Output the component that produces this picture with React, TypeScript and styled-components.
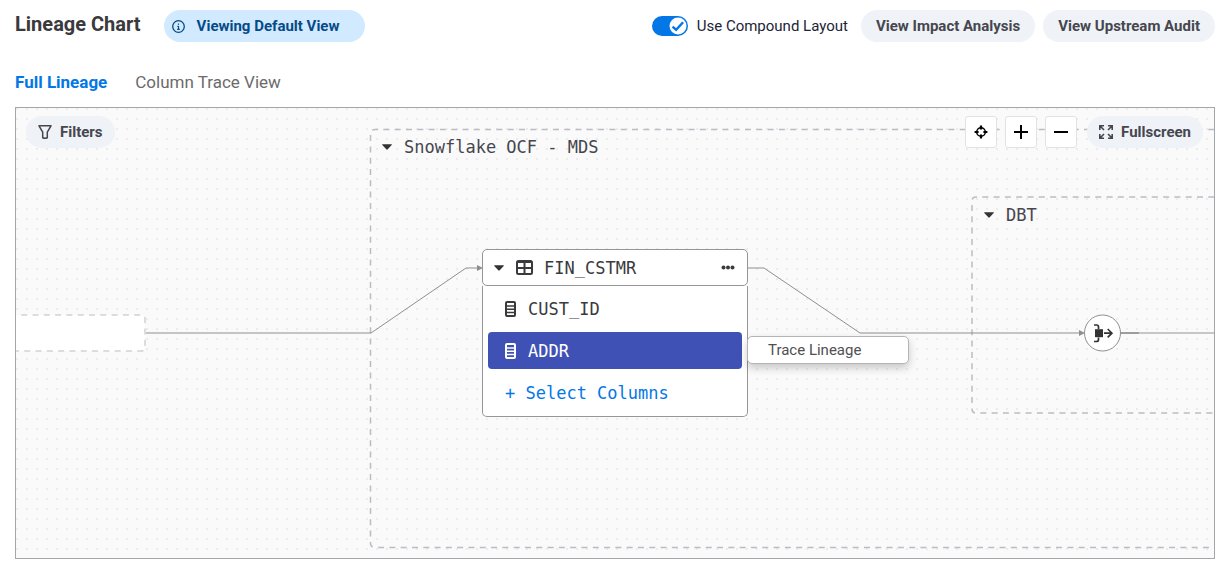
import React, { useState } from "react";
import styled, { createGlobalStyle } from "styled-components";

const ui = `Roboto, "Liberation Sans", sans-serif`;
const mono = `"DejaVu Sans Mono", "Liberation Mono", monospace`;

const GlobalStyle = createGlobalStyle`
  *, *::before, *::after { box-sizing: border-box; }
  body { margin: 0; background: #fff; color: #3c3c3e; font-family: ${ui}; }
  button { font: inherit; cursor: pointer; }
`;

const Page = styled.main`
  display: flex;
  flex-direction: column;
  min-height: 100vh;
  padding: 10px 12px 9px 15px;
`;

const Header = styled.header`
  display: flex;
  align-items: center;
  height: 32px;
`;

const Title = styled.h1`
  margin: 0 23px 4px 0;
  font-size: 20px;
  line-height: 24px;
  font-weight: 700;
  color: #3a3a3c;
`;

const Badge = styled.div`
  display: flex;
  align-items: center;
  gap: 12px;
  height: 32px;
  padding: 0 26px 0 8px;
  border-radius: 16px;
  background: #d2eaff;
  color: #054a86;
  font-size: 15px;
  font-weight: 700;
`;

const Actions = styled.div`
  display: flex;
  align-items: center;
  gap: 8px;
  margin-left: auto;
`;

const ToggleLabel = styled.label`
  display: flex;
  align-items: center;
  gap: 9px;
  margin-right: 5px;
  font-size: 15px;
  color: #1c2438;
`;

const ToggleBox = styled.span`
  position: relative;
  display: flex;
`;

const Toggle = styled.input`
  appearance: none;
  width: 36px;
  height: 20px;
  margin: 0;
  border-radius: 10px;
  background: #9aa3ad;
  cursor: pointer;
  &:checked { background: #0377e6; }
`;

const Knob = styled.svg<{ $on: boolean }>`
  position: absolute;
  top: 1px;
  left: ${(p) => (p.$on ? 17 : 1)}px;
  pointer-events: none;
`;

const PillButton = styled.button<{ $compact?: boolean }>`
  display: flex;
  align-items: center;
  justify-content: center;
  gap: 8px;
  height: 32px;
  padding: 0 ${(p) => (p.$compact ? 12 : 15)}px;
  border: 0;
  border-radius: 16px;
  background: #eff3f7;
  color: #46464f;
  font-size: 15px;
  font-weight: 700;
  white-space: nowrap;
`;

const Tabs = styled.nav`
  display: flex;
  gap: 28px;
  margin: 28px 0 13px;
`;

const Tab = styled.button<{ $active?: boolean }>`
  padding: 0;
  border: 0;
  background: none;
  font-size: 17px;
  line-height: 24px;
  font-weight: ${(p) => (p.$active ? 700 : 400)};
  color: ${(p) => (p.$active ? "#0377e6" : "#6b6b6b")};
`;

const Canvas = styled.section`
  position: relative;
  flex: 1;
  min-height: 450px;
  overflow: hidden;
  border: 1px solid #a3a7a9;
  background-color: #fafafa;
  background-image: conic-gradient(from 270deg at 2px 2px, #ebebeb 90deg, transparent 0);
  background-size: 10px 10px;
`;

const Drawing = styled.svg`
  position: absolute;
  inset: 0;
  width: 100%;
  height: 100%;
`;

const Toolbar = styled.div`
  position: relative;
  display: flex;
  align-items: center;
  justify-content: space-between;
  padding: 8px 11px 8px 10px;
`;

const ToolGroup = styled.div`
  display: flex;
  align-items: center;
  gap: 10px;
`;

const ZoomTools = styled.div`
  display: flex;
  gap: 8px;
`;

const SquareButton = styled.button`
  display: grid;
  place-items: center;
  width: 32px;
  height: 32px;
  padding: 0;
  border: 1px solid #e2e2e4;
  border-radius: 3px;
  background: #fff;
  color: #000;
`;

const GroupLabel = styled.button<{ $x: number; $y: number }>`
  position: absolute;
  left: ${(p) => p.$x}px;
  top: ${(p) => p.$y}px;
  display: flex;
  align-items: center;
  gap: 11px;
  padding: 0;
  border: 0;
  background: none;
  font-family: ${mono};
  font-size: 17px;
  line-height: 24px;
  color: #46464f;
`;

const TableNode = styled.article`
  position: absolute;
  left: 466px;
  top: 141px;
  width: 266px;
  font-family: ${mono};
  font-size: 17px;
  line-height: 24px;
  color: #3a3a3c;
`;

const NodeHeader = styled.header`
  display: flex;
  align-items: center;
  height: 37px;
  padding: 0 12px 0 10px;
  border: 1px solid #969696;
  border-radius: 5px;
  background: #fff;
`;

const IconButton = styled.button`
  display: flex;
  padding: 0;
  border: 0;
  background: none;
  color: inherit;
`;

const NodeName = styled.span`
  flex: 1;
  margin-left: 11px;
`;

const TableIcon = styled.svg`
  margin-left: 11px;
`;

const NodeBody = styled.div`
  display: flex;
  flex-direction: column;
  gap: 5px;
  padding: 4px 5px 5px;
  border: 1px solid #969696;
  border-top: 0;
  border-radius: 0 0 5px 5px;
  background: #fff;
`;

const ColumnRow = styled.button<{ $selected?: boolean; $link?: boolean }>`
  display: flex;
  align-items: center;
  gap: 12px;
  height: 37px;
  padding: 0 17px;
  border: 0;
  border-radius: 4px;
  background: ${(p) => (p.$selected ? "#3f51b5" : "#fff")};
  color: ${(p) => (p.$selected ? "#fff" : p.$link ? "#0377e6" : "inherit")};
`;

const ContextMenu = styled.div`
  position: absolute;
  left: 731px;
  top: 228px;
  width: 162px;
  border: 1px solid #b4b4b6;
  border-radius: 5px;
  background: #fff;
  box-shadow: 0 4px 8px rgba(0, 0, 0, 0.2);
`;

const MenuItem = styled.button`
  display: block;
  width: 100%;
  padding: 0 20px;
  border: 0;
  background: none;
  text-align: left;
  font-size: 15px;
  line-height: 26px;
  color: #505052;
`;

const Caret = () => (
  <svg width="12" height="8" viewBox="0 0 12 8" aria-hidden="true">
    <path d="M1.6 1.200h8.800q.9 0 .3.7L6.700 6.300q-.7.7-1.400 0L1.300 1.900q-.6-.7.3-.7z" fill="#333" />
  </svg>
);

const ColumnIcon = () => (
  <svg width="11" height="16" viewBox="0 0 11 16" fill="none" stroke="currentColor" aria-hidden="true">
    <rect x="1" y="1" width="9" height="14" rx="1" strokeWidth="2" />
    <path d="M1 5h9M1 8.200h9M1 11.400h9" strokeWidth="1.500" />
  </svg>
);

export default function App() {
  const [compound, setCompound] = useState(true);

  return (
    <>
      <GlobalStyle />
      <Page>
        <Header>
          <Title>Lineage Chart</Title>
          <Badge>
            <svg width="13" height="13" viewBox="0 0 13 13" fill="none" stroke="currentColor" aria-hidden="true">
              <circle cx="6.5" cy="6.5" r="5.8" strokeWidth="1.3" />
              <path d="M6.5 3.4v1.4M6.5 6v3.6M5.4 6.3h1.1M5.2 9.4h2.6" strokeWidth="1.2" />
            </svg>
            Viewing Default View
          </Badge>
          <Actions>
            <ToggleLabel>
              <ToggleBox>
                <Toggle
                  type="checkbox"
                  role="switch"
                  checked={compound}
                  onChange={(e) => setCompound(e.target.checked)}
                />
                <Knob $on={compound} width="18" height="18" viewBox="0 0 18 18" aria-hidden="true">
                  <circle cx="9" cy="9" r="8.5" fill="#fff" />
                  {compound && <path d="M3.600 9.600l3.500 3.200 7-7.600" fill="none" stroke="#0377e6" strokeWidth="2.400" />}
                </Knob>
              </ToggleBox>
              Use Compound Layout
            </ToggleLabel>
            <PillButton>View Impact Analysis</PillButton>
            <PillButton>View Upstream Audit</PillButton>
          </Actions>
        </Header>

        <Tabs>
          <Tab $active>Full Lineage</Tab>
          <Tab>Column Trace View</Tab>
        </Tabs>

        <Canvas>
          <Drawing aria-hidden="true">
            <g fill="none" stroke="#bcbcc4" strokeWidth="1.5" strokeDasharray="6 5.3">
              <path d="M1300 21.5H359q-4.5 0-4.5 4.5V435q0 4.500 4.500 4.500H1300" />
              <path d="M1300 89H960q-4 0-4 4V301q0 4 4 4H1300" />
              <path d="M-40 207H125q4 0 4 4v28q0 4-4 4H-40z" fill="#fff" stroke="#d2d2d8" />
            </g>
            <g fill="none" stroke="#8f8f8f">
              <path d="M130 225H355L450 160H463M732 160H748L844 225H1066" />
              <path d="M1105 225H1300" stroke="#b5b5b5" strokeWidth="1.5" />
              <path d="M1105 225H1123" strokeWidth="1.5" />
            </g>
            <path d="M461 157l6 3-6 3zM1063 222l6 3-6 3z" fill="#8f8f8f" />
            <circle cx="1086.5" cy="225" r="18" fill="#fff" stroke="#8f8f8f" />
            <g fill="none" stroke="#333" strokeWidth="1.7">
              <path d="M1078 217h2.500q2 0 2 2v2M1078 233.500h2.500q2 0 2-2v-2M1088 225.200h7.500M1091.700 221l4.200 4.200-4.200 4.200" />
              <path d="M1079 221.200h8v8h-8z" fill="#333" stroke="none" />
            </g>
          </Drawing>

          <Toolbar>
            <PillButton $compact>
              <svg width="14" height="16" viewBox="0 0 14 16" fill="none" stroke="currentColor" strokeWidth="1.5" strokeLinejoin="round" aria-hidden="true">
                <path d="M1 1.800h12L9.300 8.200v5.600q-2.300 1-4.600 0V8.200z" />
              </svg>
              Filters
            </PillButton>
            <ToolGroup>
              <ZoomTools>
                <SquareButton aria-label="Center">
                  <svg width="14" height="14" viewBox="0 0 14 14" fill="none" stroke="currentColor" strokeWidth="1.5" aria-hidden="true">
                    <circle cx="7" cy="7" r="4.300" />
                    <path d="M7 .6v4M7 9.400v4M.6 7h4M9.400 7h4" strokeWidth="2.200" />
                  </svg>
                </SquareButton>
                <SquareButton aria-label="Zoom in">
                  <svg width="14" height="14" viewBox="0 0 14 14" stroke="currentColor" strokeWidth="2" aria-hidden="true">
                    <path d="M0 7h14M7 0v14" />
                  </svg>
                </SquareButton>
                <SquareButton aria-label="Zoom out">
                  <svg width="14" height="14" viewBox="0 0 14 14" stroke="currentColor" strokeWidth="2" aria-hidden="true">
                    <path d="M0 7h14" />
                  </svg>
                </SquareButton>
              </ZoomTools>
              <PillButton $compact>
                <svg width="14" height="14" viewBox="0 0 14 14" fill="none" stroke="currentColor" strokeWidth="1.6" aria-hidden="true">
                  <path d="M.8 5V.8H5M.8.8l4.200 4.200M9 .8h4.200V5M13.200.8L9 5M.8 9v4.200H5M.8 13.200L5 9M13.200 9v4.200H9M13.200 13.200L9 9" />
                </svg>
                Fullscreen
              </PillButton>
            </ToolGroup>
          </Toolbar>

          <GroupLabel $x={365} $y={27}>
            <Caret />
            Snowflake OCF - MDS
          </GroupLabel>
          <GroupLabel $x={967} $y={95}>
            <Caret />
            DBT
          </GroupLabel>

          <TableNode>
            <NodeHeader>
              <IconButton aria-label="Collapse">
                <Caret />
              </IconButton>
              <TableIcon width="17" height="15" viewBox="0 0 17 15" fill="none" stroke="currentColor" strokeWidth="2" aria-hidden="true">
                <rect x="1" y="1" width="15" height="13" rx="1.5" />
                <path d="M1 2h15M8.500 1v13M1 8h15" />
              </TableIcon>
              <NodeName>FIN_CSTMR</NodeName>
              <IconButton aria-label="More options">
                <svg width="14" height="5" viewBox="0 0 14 5" fill="currentColor" aria-hidden="true">
                  <circle cx="2.500" cy="2.500" r="2" />
                  <circle cx="7" cy="2.500" r="2" />
                  <circle cx="11.500" cy="2.500" r="2" />
                </svg>
              </IconButton>
            </NodeHeader>
            <NodeBody>
              <ColumnRow>
                <ColumnIcon />
                CUST_ID
              </ColumnRow>
              <ColumnRow $selected>
                <ColumnIcon />
                ADDR
              </ColumnRow>
              <ColumnRow $link>+ Select Columns</ColumnRow>
            </NodeBody>
          </TableNode>

          <ContextMenu role="menu">
            <MenuItem role="menuitem">Trace Lineage</MenuItem>
          </ContextMenu>
        </Canvas>
      </Page>
    </>
  );
}
